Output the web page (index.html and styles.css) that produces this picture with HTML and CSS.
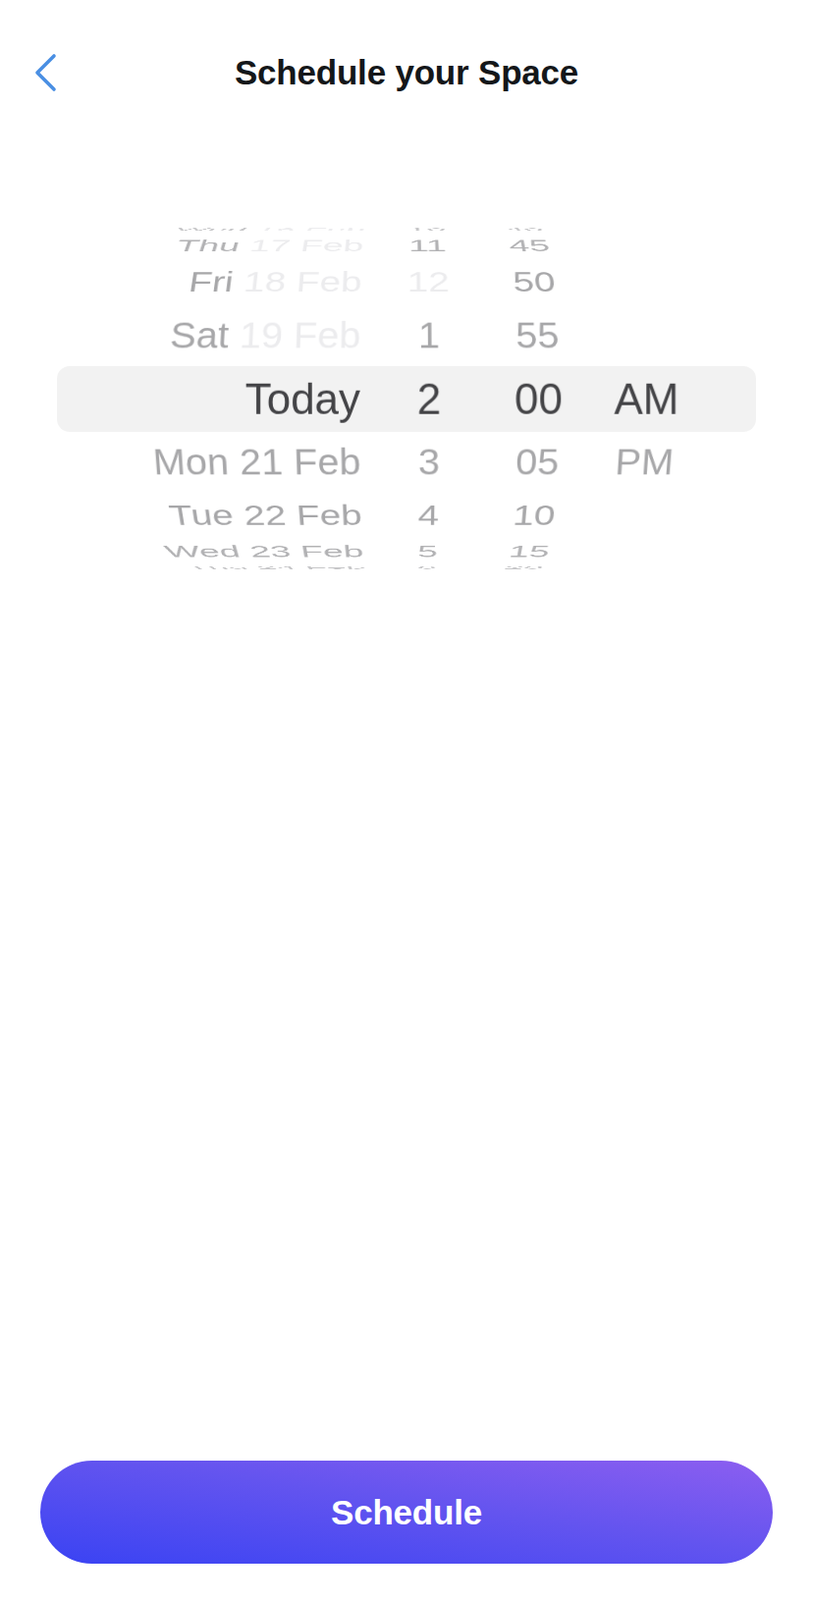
FILE: index.html
```html
<!DOCTYPE html>
<html>
<head>
    <title>Schedule your Space</title>
    <link rel="stylesheet" href="styles.css">
</head>
<body>
    <header class="topbar">
        <a class="back" href="#">
            <svg width="24" height="40" viewBox="0 0 24 40">
                <path d="M20 3 L3 20 L20 37" fill="none" stroke="#4a8fe3" stroke-width="3.6" stroke-linecap="round" stroke-linejoin="round"/>
            </svg>
        </a>
        <h1 class="title">Schedule your Space</h1>
        <span></span>
    </header>

    <main class="content">
        <div class="picker">
            <div class="band"></div>
            <div class="wheels">
                <div class="col c-date">
                    <div class="row u4">Wed <span class="off">16 Feb</span></div>
                    <div class="row u3">Thu <span class="off">17 Feb</span></div>
                    <div class="row u2">Fri <span class="off">18 Feb</span></div>
                    <div class="row u1">Sat <span class="off">19 Feb</span></div>
                    <div class="row mid">Today</div>
                    <div class="row d1">Mon 21 Feb</div>
                    <div class="row d2">Tue 22 Feb</div>
                    <div class="row d3">Wed 23 Feb</div>
                    <div class="row d4">Thu 24 Feb</div>
                </div>
                <div class="col c-hour">
                    <div class="row u4">10</div>
                    <div class="row u3">11</div>
                    <div class="row u2 off">12</div>
                    <div class="row u1">1</div>
                    <div class="row mid">2</div>
                    <div class="row d1">3</div>
                    <div class="row d2">4</div>
                    <div class="row d3">5</div>
                    <div class="row d4">6</div>
                </div>
                <div class="col c-min">
                    <div class="row u4">40</div>
                    <div class="row u3">45</div>
                    <div class="row u2">50</div>
                    <div class="row u1">55</div>
                    <div class="row mid">00</div>
                    <div class="row d1">05</div>
                    <div class="row d2">10</div>
                    <div class="row d3">15</div>
                    <div class="row d4">20</div>
                </div>
                <div class="col c-ampm">
                    <div class="row mid">AM</div>
                    <div class="row d1">PM</div>
                </div>
            </div>
        </div>
    </main>

    <footer class="actions">
        <button class="schedule-btn">Schedule</button>
    </footer>
</body>
</html>
```

FILE: styles.css
```css
body {
    margin: 0;
    min-height: 1630px;
    display: flex;
    flex-direction: column;
    background: #fff;
    font-family: "Liberation Sans", Arial, sans-serif;
}

.topbar {
    display: grid;
    grid-template-columns: 1fr auto 1fr;
    align-items: center;
    height: 44px;
    margin-top: 52px;
}

.back {
    display: flex;
    padding-left: 35px;
}

.title {
    margin: 0;
    font-size: 35px;
    font-weight: bold;
    color: #14171a;
    letter-spacing: -0.2px;
}

.content {
    flex: 1;
}

/* wheel picker */
.picker {
    display: grid;
    margin-top: 127px;
    height: 362px;
    padding-top: 4px;
    box-sizing: border-box;
    overflow: hidden;
}

.band,
.wheels {
    grid-area: 1 / 1;
}

.band {
    align-self: center;
    height: 67px;
    margin: 0 58px;
    border-radius: 13px;
    background: #f2f2f2;
}

.wheels {
    display: flex;
    padding-left: 116px;
    perspective: 1200px;
    perspective-origin: 414px 50%;
}

.col {
    display: grid;
    transform-style: preserve-3d;
    text-align: center;
}

.row {
    grid-area: 1 / 1;
    align-self: center;
    height: 66px;
    line-height: 66px;
    font-size: 40px;
    color: #a7a7a9;
    white-space: nowrap;
    backface-visibility: hidden;
}

.c-date { width: 251px; text-align: right; }
.c-date .row { transform-origin: right center; }
.c-hour { width: 74px; margin-left: 33px; }
.c-min { width: 75px; margin-left: 37px; }
.c-ampm { width: 75px; margin-left: 35px; }

.mid {
    color: #434346;
    transform: scale(1.1);
}

.u1 { transform: translateZ(-200px) rotateX(19deg) translateZ(200px); }
.u2 { transform: translateZ(-200px) rotateX(38deg) translateZ(200px); }
.u3 { transform: translateZ(-200px) rotateX(57deg) translateZ(200px); color: #b2b2b4; }
.u4 { transform: translateZ(-200px) rotateX(76deg) translateZ(200px); color: #c6c6c8; }
.d1 { transform: translateZ(-200px) rotateX(-19deg) translateZ(200px); }
.d2 { transform: translateZ(-200px) rotateX(-38deg) translateZ(200px); }
.d3 { transform: translateZ(-200px) rotateX(-57deg) translateZ(200px); color: #b2b2b4; }
.d4 { transform: translateZ(-200px) rotateX(-76deg) translateZ(200px); color: #c6c6c8; }

.row .off,
.row.off {
    color: #ececee;
}

/* bottom action */
.actions {
    padding: 0 41px 37px;
}

.schedule-btn {
    display: block;
    width: 100%;
    height: 105px;
    border: none;
    border-radius: 53px;
    background: linear-gradient(to top right, #3a43f3, #6354ef 55%, #8c5ef0);
    color: #fff;
    font-family: "Liberation Sans", Arial, sans-serif;
    font-size: 35px;
    font-weight: bold;
    letter-spacing: -0.2px;
    cursor: pointer;
}
```
